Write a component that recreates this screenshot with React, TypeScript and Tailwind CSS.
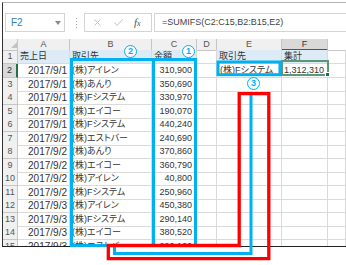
const rows: [string, string, string][] = [
  ["2017/9/1", "(株)アイレン", "310,900"],
  ["2017/9/1", "(株)あんり", "350,690"],
  ["2017/9/1", "(株)Fシステム", "330,970"],
  ["2017/9/1", "(株)エイコー", "190,070"],
  ["2017/9/1", "(株)Fシステム", "440,240"],
  ["2017/9/2", "(株)エストバー", "240,690"],
  ["2017/9/2", "(株)あんり", "370,860"],
  ["2017/9/2", "(株)エイコー", "360,790"],
  ["2017/9/2", "(株)アイレン", "40,800"],
  ["2017/9/2", "(株)Fシステム", "250,960"],
  ["2017/9/3", "(株)アイレン", "450,380"],
  ["2017/9/3", "(株)Fシステム", "290,140"],
  ["2017/9/3", "(株)エイコー", "380,520"],
  ["2017/9/3", "(株)エストバー", "290,160"],
];

const cols = "grid grid-cols-[15px_52px_82px_45px_20px_65px_46px_1fr]";
const cell = "border-r border-b border-[#dadada] overflow-hidden whitespace-nowrap";
const head = "border-r border-b border-[#c6c6c6] bg-[#f0f0f0] text-center text-[9px] leading-[10px] text-[#555]";

function Circled({ n, className }: { n: string; className: string }) {
  return (
    <div
      className={`absolute flex h-[13px] w-[13px] items-center justify-center rounded-full border-[1.5px] border-[#00b0f0] bg-white text-[9px] font-bold leading-none text-[#00b0f0] ${className}`}
    >
      {n}
    </div>
  );
}

export default function App() {
  return (
    <div className="relative h-[265px] w-[346px] overflow-hidden bg-white font-['Liberation_Sans','Noto_Sans_CJK_JP',sans-serif] [font-feature-settings:'palt']">
      <div className="ml-[2px] mt-[2px] h-[245px] overflow-hidden border-b border-l border-t border-b-[#222] border-l-[#333] border-t-[#b5b5b5]">
        {/* formula bar */}
        <div className="flex h-[33px] items-start pt-[10px]">
          <div className="ml-[2px] flex h-[19px] w-[60px] items-center justify-between border border-[#d4d4d4] pl-[5px] pr-[3px]">
            <span className="text-[10px] text-[#2f7fc1]">F2</span>
            <svg width="6" height="4" viewBox="0 0 6 4">
              <path d="M0 0h6L3 4z" fill="#8a8a8a" />
            </svg>
          </div>
          <div className="ml-[11px] mt-[5px] flex flex-col gap-[2px]">
            <span className="h-[1px] w-[1px] bg-[#aaa]" />
            <span className="h-[1px] w-[1px] bg-[#aaa]" />
            <span className="h-[1px] w-[1px] bg-[#aaa]" />
            <span className="h-[1px] w-[1px] bg-[#aaa]" />
          </div>
          <div className="ml-[7px] flex h-[19px] w-[68px] items-center border border-[#d4d4d4]">
            <svg className="ml-[9px]" width="7" height="7" viewBox="0 0 7 7">
              <path d="M0.5 0.5l6 6M6.5 0.5l-6 6" stroke="#c2c2c2" strokeWidth="1" />
            </svg>
            <svg className="ml-[13px]" width="9" height="7" viewBox="0 0 9 7">
              <path d="M0.5 3.5l2.5 3L8.5 0.5" stroke="#c2c2c2" strokeWidth="1" fill="none" />
            </svg>
            <span className="ml-[11px] font-['Liberation_Serif',serif] text-[11px] italic leading-none text-[#555]">
              f<span className="text-[8px]">x</span>
            </span>
          </div>
          <div className="-mr-[2px] ml-[2px] flex h-[19px] flex-1 items-center border border-[#d4d4d4] pl-[7px] text-[9px] text-[#444]">
            =SUMIFS(C2:C15,B2:B15,E2)
          </div>
        </div>

        {/* column headers */}
        <div className={`${cols} mt-[3px] h-[11px]`}>
          <div className={`${head} relative`}>
            <svg className="absolute left-[8px] top-[3px]" width="6" height="6" viewBox="0 0 6 6">
              <path d="M6 0v6H0z" fill="#c4c4c4" />
            </svg>
          </div>
          <div className={head}>A</div>
          <div className={head}>B</div>
          <div className={head}>C</div>
          <div className={head}>D</div>
          <div className={head}>E</div>
          <div className="border-b-2 border-r border-b-[#217346] border-r-[#c6c6c6] bg-[#d9d9d9] text-center text-[9px] leading-[10px] text-[#333]">
            F
          </div>
          <div className="border-b border-[#c6c6c6] bg-white" />
        </div>

        {/* row 1 */}
        <div className={`${cols} h-[14px] text-[9px] leading-[13px] text-[#333]`}>
          <div className={head + " leading-[13px]"}>1</div>
          <div className={`${cell} bg-[#ddebf7] pl-[2px]`}>売上日</div>
          <div className={`${cell} bg-[#ddebf7] pl-[2px]`}>取引先</div>
          <div className={`${cell} bg-[#ddebf7] pl-[2px]`}>金額</div>
          <div className={cell} />
          <div className={`${cell} bg-[#ddebf7] pl-[2px]`}>取引先</div>
          <div className={`${cell} bg-[#ddebf7] pl-[2px]`}>集計</div>
          <div className={cell} />
        </div>

        {/* data rows */}
        {rows.map(([date, name, amount], i) => (
          <div key={i} className={`${cols} h-[13.5px] text-[9px] leading-[13px] text-[#333]`}>
            {i === 0 ? (
              <div className="border-b border-r-2 border-b-[#c6c6c6] border-r-[#217346] bg-[#d9d9d9] text-center text-[9px] leading-[13px] text-[#333]">
                2
              </div>
            ) : (
              <div className={head + " leading-[13px]"}>{i + 2}</div>
            )}
            <div className={`${cell} pr-[2px] text-right text-[10px]`}>{date}</div>
            <div className={`${cell} pl-[2px]`}>{name}</div>
            <div className={`${cell} pr-[4px] text-right`}>{amount}</div>
            <div className={cell} />
            <div className={`${cell} pl-[3px]`}>{i === 0 ? "(株)Fシステム" : ""}</div>
            <div className={`${cell} pr-[3px] text-right`}>{i === 0 ? "1,312,310" : ""}</div>
            <div className={cell} />
          </div>
        ))}
      </div>

      {/* selected cell F2 */}
      <div className="absolute left-[281px] top-[60px] h-[16px] w-[48px] border-2 border-[#5c9878]" />
      <div className="absolute left-[325px] top-[72px] h-[5px] w-[5px] border border-white bg-[#217346]" />

      {/* annotations */}
      <svg className="pointer-events-none absolute left-0 top-0" width="346" height="265" viewBox="0 0 346 265">
        <g fill="none" stroke="#00b0f0" strokeWidth="3">
          <rect x="71.5" y="59.5" width="82" height="186" />
          <rect x="153.5" y="59.5" width="42" height="186" />
          <rect x="218" y="62" width="62" height="12.7" />
          <polyline points="114.5,246 114.5,253.5 251,253.5 251,93" />
        </g>
        <polygon
          points="108.3,245.5 239.2,245.5 239.2,93.7 268.8,93.7 268.8,258.7 108.3,258.7"
          fill="none"
          stroke="#ff0000"
          strokeWidth="3.3"
        />
      </svg>

      <Circled n="2" className="left-[124px] top-[45px]" />
      <Circled n="1" className="left-[182px] top-[45px]" />
      <Circled n="3" className="left-[247px] top-[77px]" />
    </div>
  );
}
